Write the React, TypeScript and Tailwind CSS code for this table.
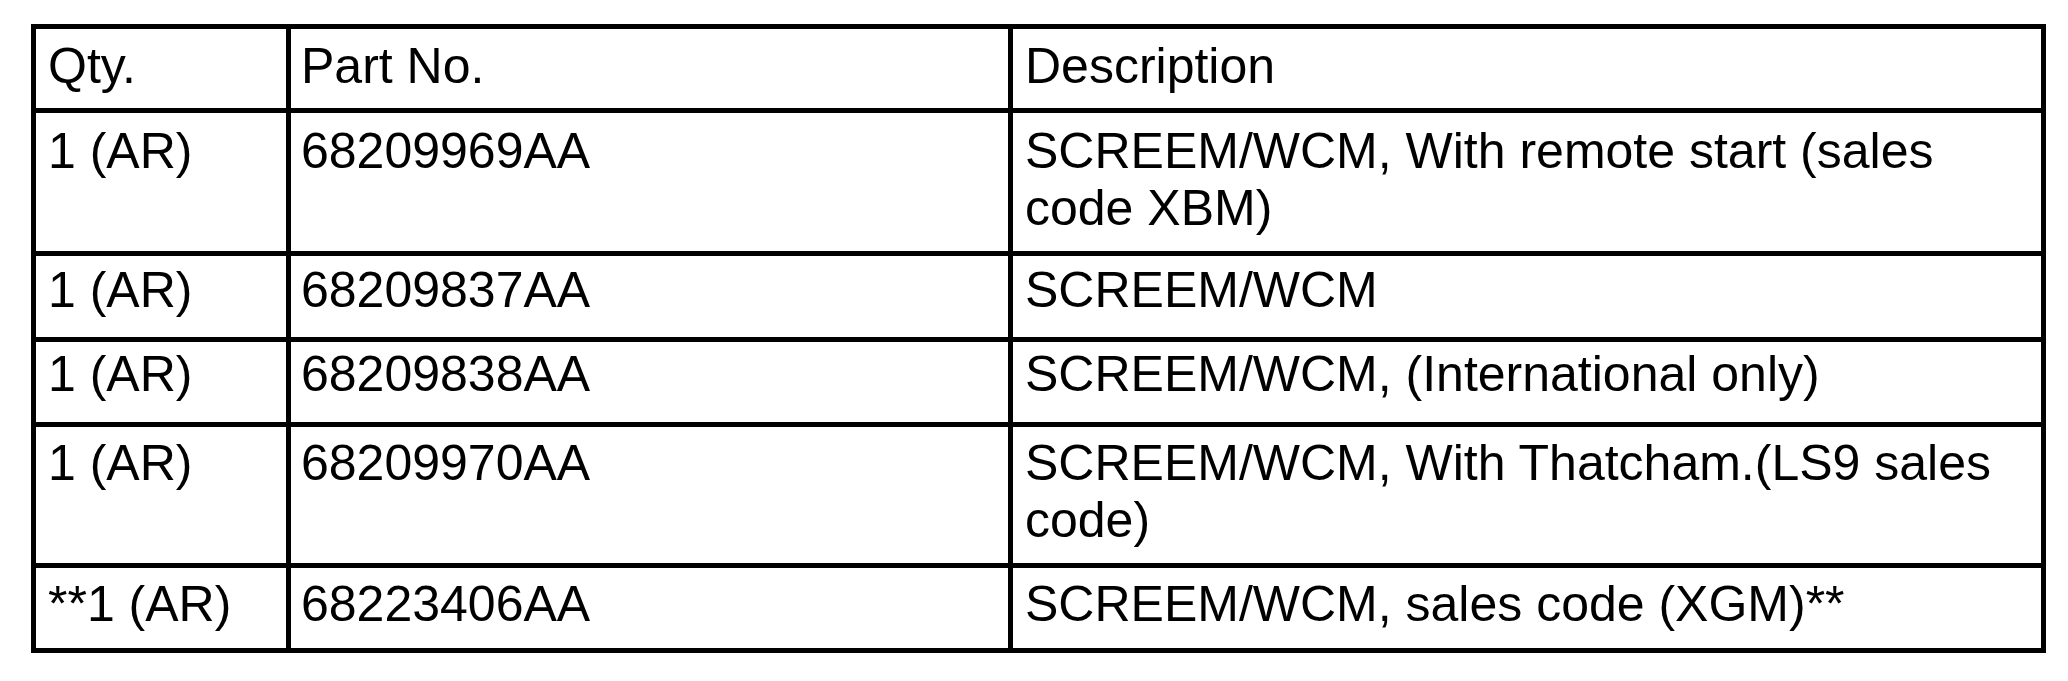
const rows = [
  { qty: "Qty.", part: "Part No.", desc: "Description", pad: "pt-[9px]" },
  {
    qty: "1 (AR)",
    part: "68209969AA",
    desc: "SCREEM/WCM, With remote start (sales code XBM)",
    pad: "pt-[10px]",
  },
  { qty: "1 (AR)", part: "68209837AA", desc: "SCREEM/WCM", pad: "pt-[6px]" },
  {
    qty: "1 (AR)",
    part: "68209838AA",
    desc: "SCREEM/WCM, (International only)",
    pad: "pt-[4px]",
  },
  {
    qty: "1 (AR)",
    part: "68209970AA",
    desc: "SCREEM/WCM, With Thatcham.(LS9 sales code)",
    pad: "pt-[8px]",
  },
  {
    qty: "**1 (AR)",
    part: "68223406AA",
    desc: "SCREEM/WCM, sales code (XGM)**",
    pad: "pt-[8px]",
  },
];

export default function App() {
  return (
    <div className="w-[2068px] h-[681px] bg-white pt-[24px] pl-[31px] font-['Liberation_Sans',Arial,sans-serif] text-black">
      <div className="grid w-[2015px] grid-cols-[255px_722px_1033px] grid-rows-[84px_143px_86px_85px_141px_85px] border-t-[5px] border-l-[5px] border-black text-[50px] leading-[57px]">
        {rows.map((row, i) => (
          <div key={i} className="contents">
            <div className={`border-r-[5px] border-b-[5px] border-black pl-3 ${row.pad}`}>
              {row.qty}
            </div>
            <div className={`border-r-[5px] border-b-[5px] border-black pl-[10px] ${row.pad}`}>
              {row.part}
            </div>
            <div className={`border-r-[5px] border-b-[5px] border-black pl-3 pr-2 ${row.pad}`}>
              {row.desc}
            </div>
          </div>
        ))}
      </div>
    </div>
  );
}
